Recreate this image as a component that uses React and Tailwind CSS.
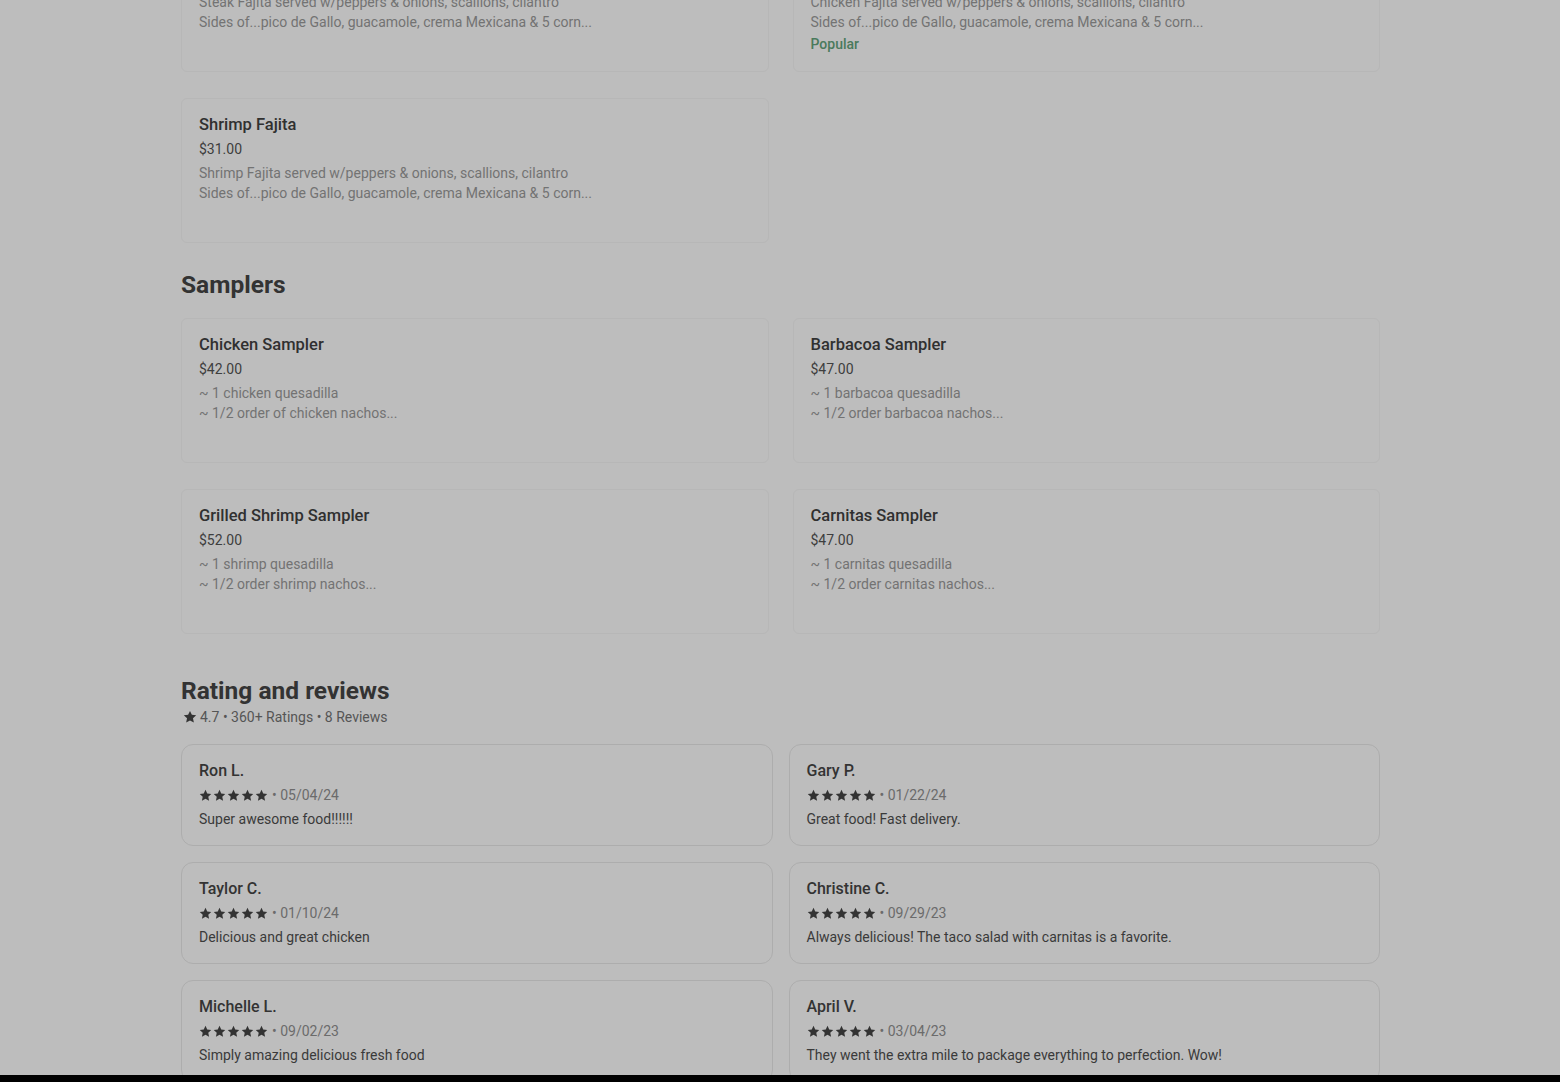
import React from "react"

const font = { fontFamily: "Roboto, 'Liberation Sans', sans-serif" }

const fajitas = [
  {
    name: "Steak Fajita",
    price: "$31.00",
    lines: ["Steak Fajita served w/peppers & onions, scallions, cilantro", "Sides of...pico de Gallo, guacamole, crema Mexicana & 5 corn..."],
  },
  {
    name: "Chicken Fajita",
    price: "$29.00",
    lines: ["Chicken Fajita served w/peppers & onions, scallions, cilantro", "Sides of...pico de Gallo, guacamole, crema Mexicana & 5 corn..."],
    popular: true,
  },
  {
    name: "Shrimp Fajita",
    price: "$31.00",
    lines: ["Shrimp Fajita served w/peppers & onions, scallions, cilantro", "Sides of...pico de Gallo, guacamole, crema Mexicana & 5 corn..."],
  },
]

const samplers = [
  { name: "Chicken Sampler", price: "$42.00", lines: ["~ 1 chicken quesadilla", "~ 1/2 order of chicken nachos..."] },
  { name: "Barbacoa Sampler", price: "$47.00", lines: ["~ 1 barbacoa quesadilla", "~ 1/2 order barbacoa nachos..."] },
  { name: "Grilled Shrimp Sampler", price: "$52.00", lines: ["~ 1 shrimp quesadilla", "~ 1/2 order shrimp nachos..."] },
  { name: "Carnitas Sampler", price: "$47.00", lines: ["~ 1 carnitas quesadilla", "~ 1/2 order carnitas nachos..."] },
]

const reviews = [
  { name: "Ron L.", date: "05/04/24", text: "Super awesome food!!!!!!" },
  { name: "Gary P.", date: "01/22/24", text: "Great food! Fast delivery." },
  { name: "Taylor C.", date: "01/10/24", text: "Delicious and great chicken" },
  { name: "Christine C.", date: "09/29/23", text: "Always delicious! The taco salad with carnitas is a favorite." },
  { name: "Michelle L.", date: "09/02/23", text: "Simply amazing delicious fresh food" },
  { name: "April V.", date: "03/04/23", text: "They went the extra mile to package everything to perfection. Wow!" },
]

function Star({ size = 12 }) {
  return (
    <svg width={size} height={size} viewBox="0 0 24 24" fill="currentColor">
      <path d="M12 1.5l3.2 6.8 7.4.8-5.5 5.1 1.5 7.3L12 17.8l-6.6 3.7 1.5-7.3-5.5-5.1 7.4-.8z" />
    </svg>
  )
}

function MenuCard({ item }) {
  return (
    <div className="h-[145px] border border-[#b7b7b7] rounded-md px-[17px] pt-[16px]">
      <div className="text-[16.5px] leading-5 font-medium text-[#303030]">{item.name}</div>
      <div className="mt-1 text-[14px] leading-5 text-[#3e3e3e]">{item.price}</div>
      <div className="mt-1 text-[14px] leading-5 text-[#737373]">
        {item.lines.map((l) => (
          <div key={l}>{l}</div>
        ))}
      </div>
      {item.popular && <div className="mt-[2px] text-[14px] leading-5 font-medium text-[#4a7a5c]">Popular</div>}
    </div>
  )
}

function ReviewCard({ r }) {
  return (
    <div className="h-[102px] border border-[#adadad] rounded-xl px-[17px] pt-4">
      <div className="text-[16px] leading-5 font-medium text-[#333333]">{r.name}</div>
      <div className="mt-1 flex items-center h-5 text-[14px] text-[#6b6b6b]">
        <span className="flex gap-[1px] text-[#333333]">
          {[0, 1, 2, 3, 4].map((i) => (
            <Star key={i} size={13} />
          ))}
        </span>
        <span className="ml-[4px]">• {r.date}</span>
      </div>
      <div className="mt-1 text-[14px] leading-5 text-[#3a3a3a]">{r.text}</div>
    </div>
  )
}

export default function App() {
  return (
    <div className="min-h-screen bg-[#bdbdbd] overflow-hidden" style={font}>
      <div className="w-[1199px] ml-[181px] -mt-[73px]">
        {/* Fajitas */}
        <div className="grid grid-cols-2 gap-x-6 gap-y-[26px]">
          {fajitas.map((f) => (
            <MenuCard key={f.name} item={f} />
          ))}
        </div>

        {/* Samplers */}
        <h2 className="mt-[26px] text-[24.5px] leading-8 font-bold text-[#333333]">Samplers</h2>
        <div className="mt-[17px] grid grid-cols-2 gap-x-6 gap-y-[26px]">
          {samplers.map((s) => (
            <MenuCard key={s.name} item={s} />
          ))}
        </div>

        {/* Reviews */}
        <h2 className="mt-[41px] text-[24.5px] leading-8 font-bold text-[#333333]">Rating and reviews</h2>
        <div className="flex items-center h-5 text-[14px] text-[#555555]">
          <span className="ml-[2px] mr-[3px] text-[#333333]">
            <Star size={14} />
          </span>
          <span>4.7 • 360+ Ratings • 8 Reviews</span>
        </div>
        <div className="mt-[17px] grid grid-cols-2 gap-4 pb-10">
          {reviews.map((r) => (
            <ReviewCard key={r.name} r={r} />
          ))}
        </div>
      </div>
      <div className="fixed bottom-0 left-0 right-0 h-[7px] bg-black" />
    </div>
  )
}
